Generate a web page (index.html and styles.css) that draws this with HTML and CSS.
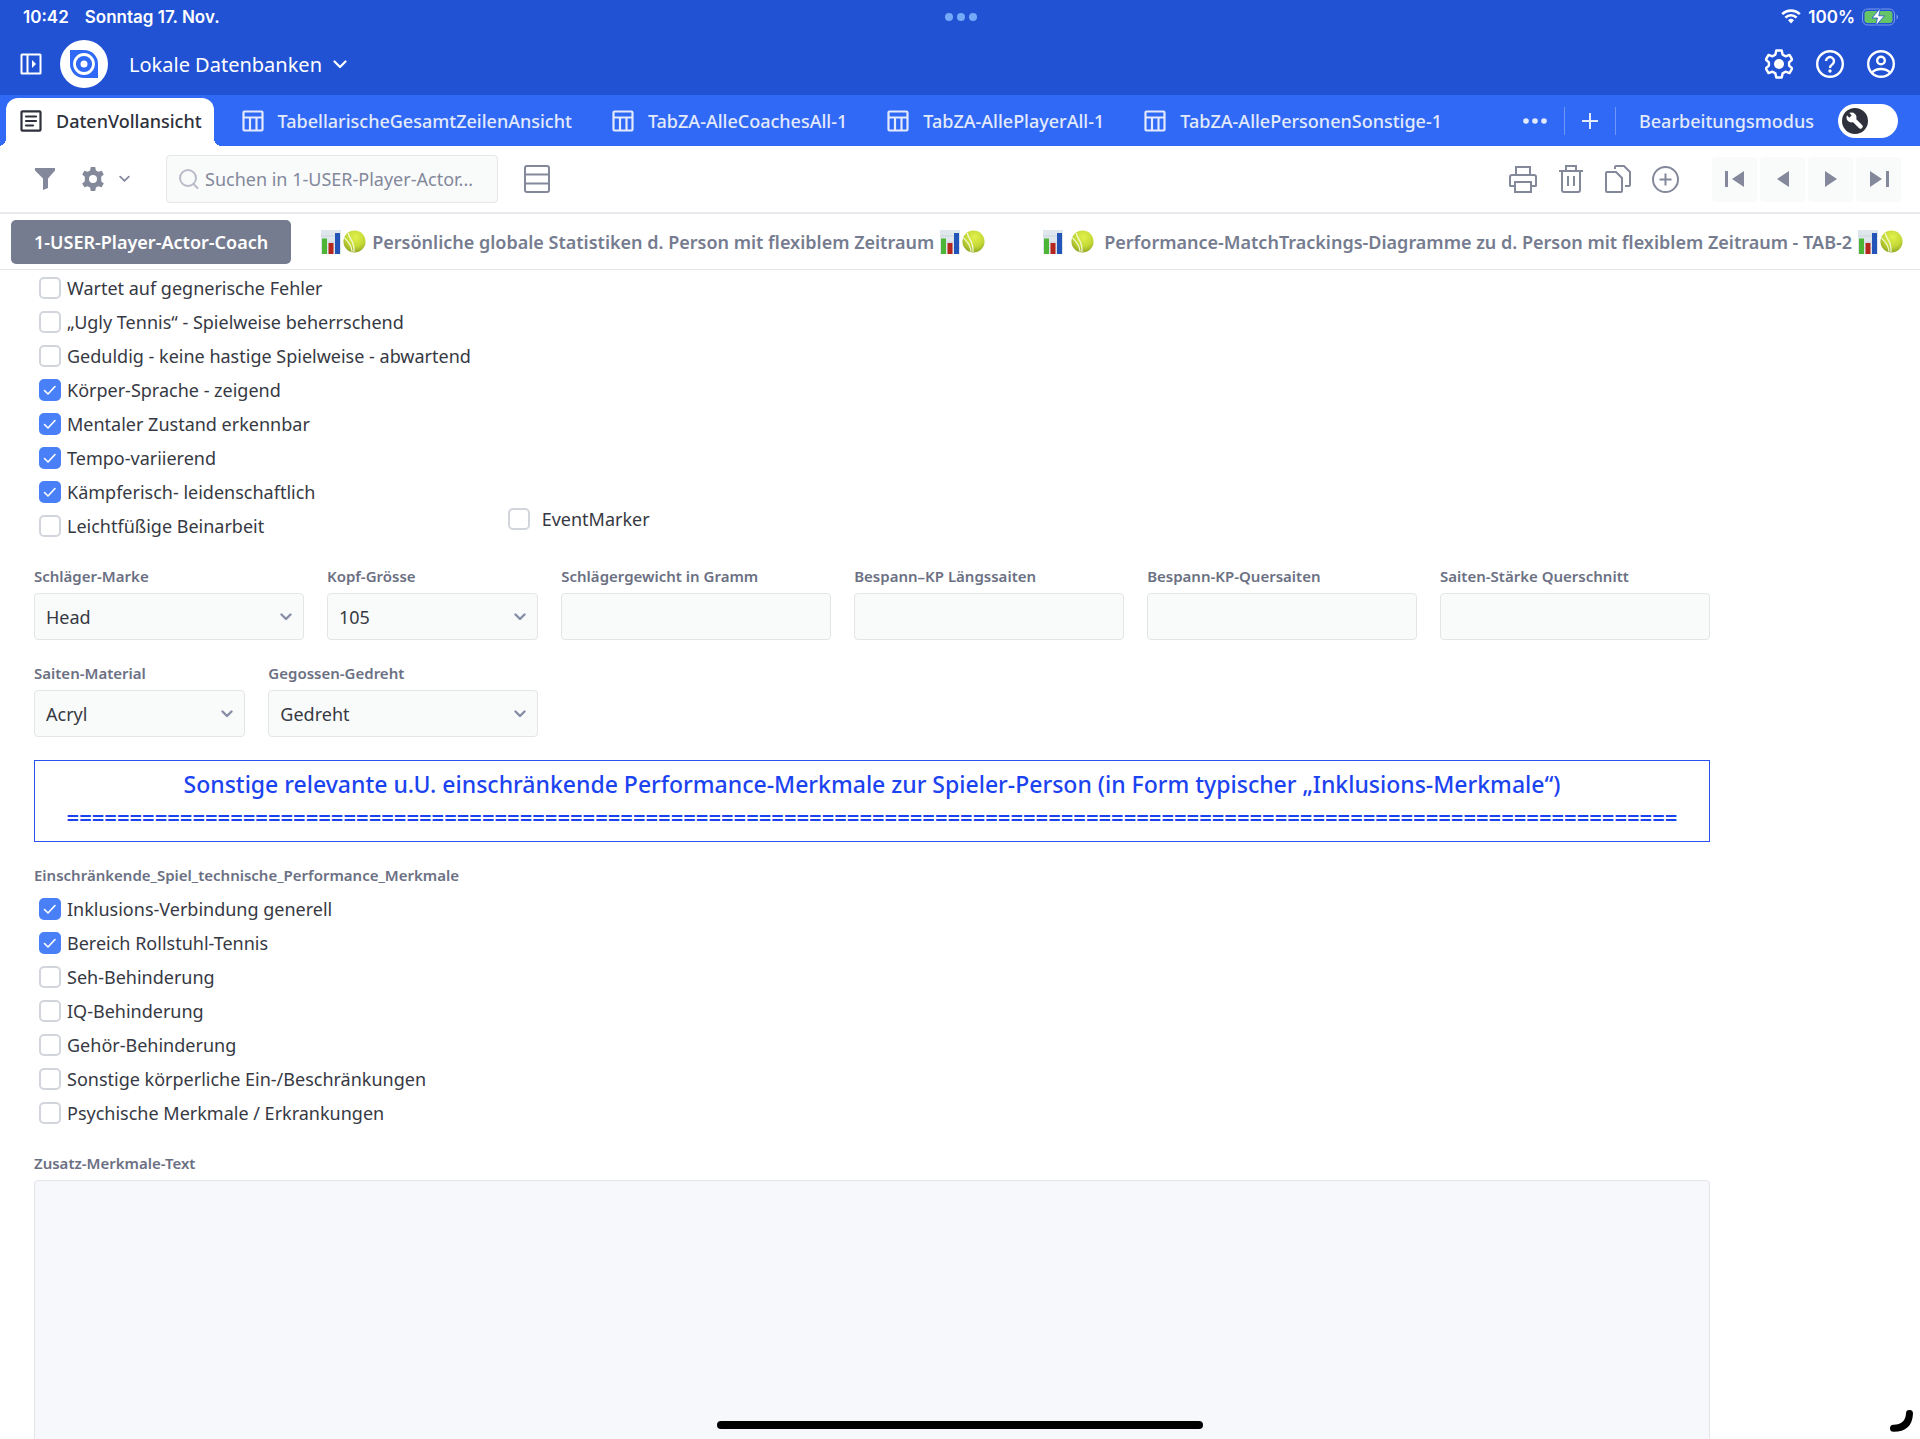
FILE: index.html
```html
<!DOCTYPE html>
<html lang="de">
<head>
  <meta charset="UTF-8" />
  <meta name="viewport" content="width=device-width, initial-scale=1.0" />
  <title>Lokale Datenbanken</title>
  <link rel="stylesheet" href="styles.css">
</head>
<body>
  <svg class="sprite" aria-hidden="true">
    <symbol id="table" viewBox="0 0 22 22">
      <path d="M2.5 1.5h17a1 1 0 0 1 1 1v17a1 1 0 0 1-1 1h-17a1 1 0 0 1-1-1v-17a1 1 0 0 1 1-1zM1.500 7.500h19M8 7.500v13M14.500 7.500v13" fill="none" stroke="currentColor" stroke-width="2.200" />
    </symbol>
    <symbol id="chevron" viewBox="0 0 14 9">
      <path d="M1.500 1.500 7 7l5.500-5.500" fill="none" stroke="currentColor" stroke-width="2.200" stroke-linecap="round" stroke-linejoin="round" />
    </symbol>
    <symbol id="chart" viewBox="0 0 20 24">
      <path d="M0 0h20v24H0z" fill="#dfe6ec" />
      <path d="M0 6h20M0 12h20M0 18h20" stroke="#cbd5de" />
      <path d="M1 8.500h5V24H1z" fill="#4db535" />
      <path d="M7.500 13h5v11h-5z" fill="#b5271e" />
      <path d="M14 3h5v21h-5z" fill="#2355b8" />
    </symbol>
    <symbol id="ball" viewBox="0 0 24 24">
      <circle cx="12" cy="12" r="11.500" fill="url(#felt)" />
      <path d="M5.500 3C6 9.500 12.500 11 11.500 23M1.500 8C4 12 8.500 13 9.500 22.500" fill="none" stroke="#f3f8d8" stroke-width="1.300" />
    </symbol>
    <defs>
      <radialGradient id="felt" cx="0.55" cy="0.3" r="0.7">
        <stop offset="0" stop-color="#e2f04c" />
        <stop offset="0.6" stop-color="#c3d936" />
        <stop offset="1" stop-color="#94a824" />
      </radialGradient>
    </defs>
  </svg>

  <header class="header">
    <div class="status">
      <div class="status-side">
        <span>10:42</span>
        <span>Sonntag 17. Nov.</span>
      </div>
      <div class="status-dots"><i></i><i></i><i></i></div>
      <div class="status-side status-right">
        <svg width="20" height="15" viewBox="0 0 20 15" fill="none" stroke="#fff" stroke-width="2.600">
          <path d="M1.200 5.200a12.500 12.500 0 0 1 17.600 0M4.400 8.600a8 8 0 0 1 11.200 0" />
          <path d="M7 11.300a4.300 4.300 0 0 1 6 0L10 14.500z" fill="#fff" stroke="none" />
        </svg>
        <span>100%</span>
        <svg width="37" height="18" viewBox="0 0 37 18">
          <rect x="0.500" y="1" width="32" height="16" rx="5" fill="none" stroke="#7d9be6" />
          <rect x="2.500" y="3" width="28" height="12" rx="3" fill="#65c466" />
          <path d="M34.500 6.500c2 .8 2 4.200 0 5z" fill="#7d9be6" />
          <path d="M18.500 0 10 10h5.500L13.500 18 22.500 7.800h-5.700z" fill="#fff" stroke="#2152d4" stroke-width="0.800" />
        </svg>
      </div>
    </div>
    <div class="appbar">
      <button class="icon-btn" aria-label="Seitenleiste">
        <svg width="22" height="22" viewBox="0 0 22 22" fill="none" stroke="currentColor" stroke-width="2">
          <path d="M2 1.500h18a.5.5 0 0 1 .5.5v18a.5.5 0 0 1-.5.5H2a.5.5 0 0 1-.5-.5V2a.5.5 0 0 1 .5-.5zM7.500 2v18" />
          <path d="M12 7v8l4-4z" fill="currentColor" stroke="none" />
        </svg>
      </button>
      <svg class="logo" width="48" height="48" viewBox="0 0 48 48">
        <circle cx="24" cy="24" r="24" fill="#fff" />
        <path d="M10 10h14a14 14 0 0 1 14 14v14H24a14 14 0 0 1-14-14z" fill="#3069f6" />
        <circle cx="24" cy="24" r="9.500" fill="none" stroke="#fff" stroke-width="2.800" />
        <circle cx="24" cy="24" r="3.500" fill="#fff" />
      </svg>
      <button class="db-btn">
        Lokale Datenbanken
        <svg width="14" height="9"><use href="#chevron" /></svg>
      </button>
      <div class="appbar-right">
        <button class="icon-btn" aria-label="Einstellungen">
          <svg width="28" height="30" viewBox="0 0 28 30">
            <path d="M11.300 1.500h5.400l.9 4.100 2.900 1.700 4-1.400 2.700 4.700-3.100 2.800v3.200l3.100 2.800-2.700 4.700-4-1.400-2.900 1.700-.9 4.100h-5.400l-.9-4.100-2.900-1.700-4 1.400-2.700-4.700 3.100-2.800v-3.200L.8 10.600l2.700-4.700 4 1.400 2.900-1.700z" fill="none" stroke="currentColor" stroke-width="2.400" stroke-linejoin="round" />
            <circle cx="14" cy="15" r="5" fill="currentColor" />
          </svg>
        </button>
        <button class="icon-btn" aria-label="Hilfe">
          <svg width="28" height="28" viewBox="0 0 28 28" fill="none" stroke="currentColor" stroke-width="2.400">
            <circle cx="14" cy="14" r="12.800" />
            <path d="M10 11a4 4 0 1 1 6.500 3.200c-1.700 1.300-2.500 1.800-2.500 3.800" />
            <circle cx="14" cy="21" r="1.700" fill="currentColor" stroke="none" />
          </svg>
        </button>
        <button class="icon-btn" aria-label="Konto">
          <svg width="28" height="28" viewBox="0 0 28 28" fill="none" stroke="currentColor" stroke-width="2.400">
            <circle cx="14" cy="14" r="12.800" />
            <circle cx="14" cy="10.500" r="3.800" />
            <path d="M5 22.500c4.500-4.600 13.500-4.600 18 0" />
          </svg>
        </button>
      </div>
    </div>
  </header>

  <nav class="tabs">
    <a class="tab active" href="#">
      <svg width="22" height="22" viewBox="0 0 22 22" fill="none" stroke="currentColor" stroke-width="2.200">
        <path d="M2.500 1.300h17a1 1 0 0 1 1 1v17.400a1 1 0 0 1-1 1h-17a1 1 0 0 1-1-1V2.300a1 1 0 0 1 1-1z" />
        <path d="M6 6.500h10M6 11h10M6 15.500h7" stroke-linecap="round" />
      </svg>
      DatenVollansicht
    </a>
    <a class="tab" href="#"><svg width="22" height="22"><use href="#table" /></svg>TabellarischeGesamtZeilenAnsicht</a>
    <a class="tab" href="#"><svg width="22" height="22"><use href="#table" /></svg>TabZA-AlleCoachesAll-1</a>
    <a class="tab" href="#"><svg width="22" height="22"><use href="#table" /></svg>TabZA-AllePlayerAll-1</a>
    <a class="tab" href="#"><svg width="22" height="22"><use href="#table" /></svg>TabZA-AllePersonenSonstige-1</a>
    <div class="tabs-right">
      <button class="icon-btn" aria-label="Mehr">
        <svg width="24" height="6" viewBox="0 0 24 6" fill="currentColor"><circle cx="3" cy="3" r="2.800" /><circle cx="12" cy="3" r="2.800" /><circle cx="21" cy="3" r="2.800" /></svg>
      </button>
      <span class="divider"></span>
      <button class="icon-btn" aria-label="Neuer Tab">
        <svg width="16" height="16" viewBox="0 0 16 16" stroke="currentColor" stroke-width="2"><path d="M8 0v16M0 8h16" /></svg>
      </button>
      <span class="divider"></span>
      <label class="edit-mode">
        Bearbeitungsmodus
        <input type="checkbox" class="toggle-input" />
        <span class="toggle">
          <svg width="26" height="26" viewBox="0 0 26 26">
            <circle cx="13" cy="13" r="13" fill="#2e313b" />
            <path d="M9.500 9.500 18.500 18.500" stroke="#fff" stroke-width="4.500" stroke-linecap="round" />
            <circle cx="9.500" cy="9.500" r="5" fill="#fff" />
            <path d="M4 4 8.500 8.500" stroke="#2e313b" stroke-width="3.200" />
          </svg>
        </span>
      </label>
    </div>
  </nav>

  <div class="toolbar">
    <button class="icon-btn" aria-label="Filter">
      <svg width="20" height="22" viewBox="0 0 20 22" fill="currentColor"><path d="M0 0h20v2.500l-7 8V20l-5 2V10.500L0 2.500z" /></svg>
    </button>
    <button class="icon-btn gear-btn" aria-label="Optionen">
      <svg width="24" height="24" viewBox="0 0 24 24" fill="currentColor">
        <path fill-rule="evenodd" d="M9.800 0h4.400l.7 3.400 2.400 1.400 3.300-1.100 2.200 3.800-2.600 2.300v4.400l2.600 2.300-2.200 3.800-3.300-1.100-2.400 1.400-.7 3.400H9.800l-.7-3.400-2.400-1.400-3.300 1.100-2.200-3.800 2.600-2.300V9.800L1.200 7.500l2.200-3.800 3.300 1.100 2.400-1.400zM12 8a4 4 0 1 0 0 8 4 4 0 0 0 0-8z" />
      </svg>
      <svg width="11" height="8"><use href="#chevron" /></svg>
    </button>
    <label class="search">
      <svg width="20" height="20" viewBox="0 0 20 20" fill="none" stroke="#b9bcc8" stroke-width="2"><circle cx="9" cy="9" r="8" /><path d="m14.500 15 4 4" stroke-linecap="round" /></svg>
      <input type="text" placeholder="Suchen in 1-USER-Player-Actor..." aria-label="Suchen" />
    </label>
    <button class="icon-btn" aria-label="Listenansicht">
      <svg width="26" height="28" viewBox="0 0 26 28" fill="none" stroke="currentColor" stroke-width="2"><rect x="1" y="1" width="24" height="26" rx="2" /><path d="M1 9.500h24M1 18.500h24" /></svg>
    </button>
    <div class="toolbar-right">
      <button class="icon-btn" aria-label="Drucken">
        <svg width="28" height="28" viewBox="0 0 28 28" fill="none" stroke="currentColor" stroke-width="2">
          <path d="M7 10V2h14v8M5 21H1.500a.5.5 0 0 1-.5-.5V12a2 2 0 0 1 2-2h22a2 2 0 0 1 2 2v8.500a.5.5 0 0 1-.5.5H23M5 17h18M6 17v10h16V17" />
        </svg>
      </button>
      <button class="icon-btn" aria-label="Löschen">
        <svg width="26" height="28" viewBox="0 0 26 28" fill="none" stroke="currentColor" stroke-width="2">
          <path d="M1 6h24M8 6V1h10v5M4 6v19a2 2 0 0 0 2 2h14a2 2 0 0 0 2-2V6M10 11v10M16 11v10" />
        </svg>
      </button>
      <button class="icon-btn" aria-label="Duplizieren">
        <svg width="26" height="28" viewBox="0 0 26 28" fill="none" stroke="currentColor" stroke-width="2">
          <path d="M1 8a1 1 0 0 1 1-1h9l6 6v13a1 1 0 0 1-1 1H2a1 1 0 0 1-1-1zM10 4V2a1 1 0 0 1 1-1h8l6 6v13a1 1 0 0 1-1 1h-4" />
        </svg>
      </button>
      <button class="icon-btn" aria-label="Hinzufügen">
        <svg width="27" height="27" viewBox="0 0 27 27" fill="none" stroke="currentColor" stroke-width="2"><circle cx="13.500" cy="13.500" r="12.500" /><path d="M13.500 7.500v12M7.500 13.500h12" /></svg>
      </button>
      <div class="pager">
        <button aria-label="Erster"><svg width="20" height="18" viewBox="0 0 20 18" fill="currentColor"><path d="M0 1h3v16H0zM19 1v16L7 9z" /></svg></button>
        <button aria-label="Zurück"><svg width="20" height="18" viewBox="0 0 20 18" fill="currentColor"><path d="M16 1v16L4 9z" /></svg></button>
        <button aria-label="Weiter"><svg width="20" height="18" viewBox="0 0 20 18" fill="currentColor"><path d="M4 1v16l12-8z" /></svg></button>
        <button aria-label="Letzter"><svg width="20" height="18" viewBox="0 0 20 18" fill="currentColor"><path d="M1 1v16l12-8zM17 1h3v16h-3z" /></svg></button>
      </div>
    </div>
  </div>

  <nav class="subtabs">
    <a class="subtab active" href="#">1-USER-Player-Actor-Coach</a>
    <a class="subtab" href="#">
      <span class="emoji"><svg width="20" height="24"><use href="#chart" /></svg><svg width="23" height="23"><use href="#ball" /></svg></span>
      <span>Persönliche globale Statistiken d. Person mit flexiblem Zeitraum</span>
      <span class="emoji"><svg width="20" height="24"><use href="#chart" /></svg><svg width="23" height="23"><use href="#ball" /></svg></span>
    </a>
    <a class="subtab" href="#">
      <span class="emoji wide"><svg width="20" height="24"><use href="#chart" /></svg><svg width="23" height="23"><use href="#ball" /></svg></span>
      <span>Performance-MatchTrackings-Diagramme zu d. Person mit flexiblem Zeitraum - TAB-2</span>
      <span class="emoji"><svg width="20" height="24"><use href="#chart" /></svg><svg width="23" height="23"><use href="#ball" /></svg></span>
    </a>
  </nav>

  <main class="content">
    <form class="form">
      <div class="checks span-8">
        <label class="check"><input type="checkbox" />Wartet auf gegnerische Fehler</label>
        <label class="check"><input type="checkbox" />„Ugly Tennis“ - Spielweise beherrschend</label>
        <label class="check"><input type="checkbox" />Geduldig - keine hastige Spielweise - abwartend</label>
        <label class="check"><input type="checkbox" checked />Körper-Sprache - zeigend</label>
        <label class="check"><input type="checkbox" checked />Mentaler Zustand erkennbar</label>
        <label class="check"><input type="checkbox" checked />Tempo-variierend</label>
        <label class="check"><input type="checkbox" checked />Kämpferisch- leidenschaftlich</label>
        <label class="check"><input type="checkbox" />Leichtfüßige Beinarbeit</label>
      </div>
      <label class="check event span-5"><input type="checkbox" />EventMarker</label>

      <div class="field span-5 first">
        <label for="marke">Schläger-Marke</label>
        <select id="marke"><option>Head</option></select>
      </div>
      <div class="field span-4">
        <label for="kopf">Kopf-Grösse</label>
        <select id="kopf"><option>105</option></select>
      </div>
      <div class="field span-5">
        <label for="gewicht">Schlägergewicht in Gramm</label>
        <input type="text" id="gewicht" />
      </div>
      <div class="field span-5">
        <label for="laengs">Bespann–KP Längssaiten</label>
        <input type="text" id="laengs" />
      </div>
      <div class="field span-5">
        <label for="quer">Bespann-KP-Quersaiten</label>
        <input type="text" id="quer" />
      </div>
      <div class="field span-5">
        <label for="staerke">Saiten-Stärke Querschnitt</label>
        <input type="text" id="staerke" />
      </div>

      <div class="field span-4 first">
        <label for="material">Saiten-Material</label>
        <select id="material"><option>Acryl</option></select>
      </div>
      <div class="field span-5">
        <label for="gedreht">Gegossen-Gedreht</label>
        <select id="gedreht"><option>Gedreht</option></select>
      </div>

      <div class="banner full">
        <h2>Sonstige relevante u.U. einschränkende Performance-Merkmale zur Spieler-Person (in Form typischer „Inklusions-Merkmale“)</h2>
        <p>================================================================================================================================</p>
      </div>

      <fieldset class="field full">
        <legend>Einschränkende_Spiel_technische_Performance_Merkmale</legend>
        <div class="checks">
          <label class="check"><input type="checkbox" checked />Inklusions-Verbindung generell</label>
          <label class="check"><input type="checkbox" checked />Bereich Rollstuhl-Tennis</label>
          <label class="check"><input type="checkbox" />Seh-Behinderung</label>
          <label class="check"><input type="checkbox" />IQ-Behinderung</label>
          <label class="check"><input type="checkbox" />Gehör-Behinderung</label>
          <label class="check"><input type="checkbox" />Sonstige körperliche Ein-/Beschränkungen</label>
          <label class="check"><input type="checkbox" />Psychische Merkmale / Erkrankungen</label>
        </div>
      </fieldset>

      <div class="field full">
        <label for="zusatz">Zusatz-Merkmale-Text</label>
        <textarea id="zusatz"></textarea>
      </div>
    </form>
  </main>

  <div class="home-bar"></div>
  <svg class="corner" width="30" height="30" viewBox="0 0 30 30"><path d="M25.500 4.500C25 14 20 19.300 9.500 19.300" fill="none" stroke="#000" stroke-width="7" stroke-linecap="round" /></svg>
</body>
</html>
```
FILE: styles.css
```css
* {
  box-sizing: border-box;
}

body {
  margin: 0;
  height: 100vh;
  display: flex;
  flex-direction: column;
  overflow: hidden;
  font-family: "Noto Sans", sans-serif;
  font-size: 18px;
  color: #363943;
  background: #fff;
}

svg {
  display: block;
  flex: none;
}

a {
  color: inherit;
  text-decoration: none;
}

button,
input,
select,
textarea {
  font: inherit;
  color: inherit;
}

button {
  padding: 0;
  border: none;
  background: none;
  cursor: pointer;
}

.sprite {
  position: absolute;
  width: 0;
  height: 0;
}

.icon-btn {
  display: flex;
  align-items: center;
}

/* header */
.header {
  background: #2152d4;
  color: #fff;
}

.status {
  display: grid;
  grid-template-columns: 1fr auto 1fr;
  align-items: center;
  height: 33px;
  padding: 0 21px 0 23px;
  font-family: Inter, sans-serif;
  font-size: 17px;
  font-weight: 600;
}

.status-side {
  display: flex;
  align-items: center;
  gap: 16px;
}

.status-right {
  justify-content: flex-end;
  gap: 7px;
}

.status-dots {
  display: flex;
  gap: 4px;
}

.status-dots i {
  width: 8px;
  height: 8px;
  border-radius: 50%;
  background: #74aaf8;
}

.appbar {
  display: flex;
  align-items: center;
  height: 62px;
  padding: 0 25px 0 20px;
}

.logo {
  margin: 0 21px 0 18px;
}

.db-btn {
  display: flex;
  align-items: center;
  gap: 11px;
  font-size: 20px;
}

.appbar-right {
  display: flex;
  gap: 23px;
  margin-left: auto;
}

/* view tabs */
.tabs {
  display: flex;
  align-items: flex-end;
  gap: 14px;
  height: 51px;
  padding-left: 6px;
  background: #3069f6;
  color: #e3eafb;
  font-weight: 500;
}

.tab {
  display: flex;
  align-items: center;
  gap: 14px;
  height: 48px;
  padding: 0 12px 2px 14px;
  white-space: nowrap;
}

.tab.active {
  position: relative;
  background: #fff;
  color: #2e313b;
  border-radius: 12px 12px 0 0;
}

.tab.active::before,
.tab.active::after {
  content: "";
  position: absolute;
  bottom: 0;
  width: 8px;
  height: 8px;
}

.tab.active::before {
  right: 100%;
  background: radial-gradient(circle at 0 0, transparent 8px, #fff 8px);
}

.tab.active::after {
  left: 100%;
  background: radial-gradient(circle at 100% 0, transparent 8px, #fff 8px);
}

.tabs-right {
  display: flex;
  align-items: center;
  gap: 17px;
  height: 50px;
  margin-left: auto;
  padding-right: 22px;
}

.divider {
  width: 1px;
  height: 28px;
  background: #6f97f9;
}

.edit-mode {
  display: flex;
  align-items: center;
  gap: 24px;
  margin-left: 6px;
}

.toggle-input {
  position: absolute;
  opacity: 0;
}

.toggle {
  width: 60px;
  height: 34px;
  padding: 4px;
  border-radius: 17px;
  background: #fff;
}

.toggle-input:checked + .toggle {
  padding-left: 30px;
}

/* toolbar */
.toolbar {
  display: flex;
  align-items: center;
  height: 68px;
  padding: 0 19px 0 35px;
  color: #83889b;
  border-bottom: 2px solid #e8eaee;
}

.gear-btn {
  gap: 14px;
  margin-left: 26px;
}

.search {
  display: flex;
  align-items: center;
  gap: 6px;
  width: 332px;
  height: 48px;
  margin: 0 26px 0 36px;
  padding-left: 12px;
  border: 1px solid #e4e6ea;
  border-radius: 4px;
  background: #f9fbfa;
}

.search input {
  flex: 1;
  min-width: 0;
  padding: 0;
  border: none;
  outline: none;
  background: none;
}

.search input::placeholder {
  color: #83889b;
  opacity: 1;
}

.toolbar-right {
  display: flex;
  align-items: center;
  gap: 21px;
  margin-left: auto;
}

.pager {
  display: flex;
  gap: 3px;
  margin-left: 12px;
}

.pager button {
  display: flex;
  align-items: center;
  justify-content: center;
  width: 45px;
  height: 45px;
  border-radius: 4px;
  background: #f9fbfa;
}

/* record tabs */
.subtabs {
  display: flex;
  align-items: center;
  flex: none;
  gap: 30px;
  height: 56px;
  padding-left: 11px;
  border-bottom: 1px solid #e4e5e8;
  color: #767c8f;
  font-weight: 600;
  white-space: nowrap;
  overflow: hidden;
}

.subtab {
  display: flex;
  align-items: center;
  flex: none;
  gap: 6px;
  height: 44px;
  margin-right: 28px;
}

.subtab.active {
  margin-right: 0;
  padding: 0 23px;
  border-radius: 5px;
  background: #767c8f;
  color: #fff;
}

.emoji {
  display: flex;
  gap: 2px;
}

.emoji.wide {
  gap: 8px;
  margin-right: 4px;
}

/* form */
.content {
  flex: 1;
  min-height: 0;
  overflow: hidden;
}

.form {
  display: grid;
  grid-template-columns: repeat(29, minmax(0, 1fr));
  gap: 23px;
  padding: 1px 210px 0 34px;
}

.full {
  grid-column: 1 / -1;
}

.span-8 {
  grid-column-end: span 8;
}

.span-5 {
  grid-column-end: span 5;
}

.span-4 {
  grid-column-end: span 4;
}

.first {
  grid-column-start: 1;
}

.checks {
  display: flex;
  flex-direction: column;
  white-space: nowrap;
}

.check {
  display: flex;
  align-items: center;
  gap: 6px;
  height: 34px;
  padding-left: 5px;
}

.check input {
  appearance: none;
  width: 22px;
  height: 22px;
  margin: 0;
  border: 2px solid #d3d5dd;
  border-radius: 5px;
  background: #fff;
}

.check input:checked {
  border-color: #4a80f7;
  background: #4a80f7 url("data:image/svg+xml,%3Csvg xmlns='http://www.w3.org/2000/svg' viewBox='0 0 14 14' fill='none' stroke='white' stroke-width='1.600' stroke-linecap='round' stroke-linejoin='round'%3E%3Cpath d='M1.500 7.500 5 11l7-7.500'/%3E%3C/svg%3E") center / 14px no-repeat;
}

.check.event {
  align-self: end;
  gap: 12px;
  height: 48px;
}

.field {
  display: flex;
  flex-direction: column;
  min-width: 0;
  margin: 0;
  padding: 0;
  border: none;
}

.field > label,
.field legend {
  margin-bottom: 7px;
  padding: 0;
  font-size: 15px;
  font-weight: 600;
  line-height: 20px;
  color: #6b7083;
}

.field > input,
.field > select,
.field > textarea {
  width: 100%;
  height: 47px;
  padding: 0 11px;
  border: 1px solid #e3e5e9;
  border-radius: 4px;
  background: #f9fbfa;
}

.field > select {
  appearance: none;
  background: #f9fbfa url("data:image/svg+xml,%3Csvg xmlns='http://www.w3.org/2000/svg' viewBox='0 0 12 8' fill='none' stroke='%23888ea6' stroke-width='2.400' stroke-linecap='round' stroke-linejoin='round'%3E%3Cpath d='M1.500 1.500 6 6l4.500-4.500'/%3E%3C/svg%3E") right 11px center / 12px 8px no-repeat;
}

.field > textarea {
  height: 400px;
  background: #f6f8fc;
  resize: none;
}

.banner {
  height: 82px;
  padding: 7px 0;
  border: 1px solid #2a52ee;
  color: #1b43f0;
  font-size: 22px;
  font-weight: 600;
  line-height: 33px;
  text-align: center;
  white-space: nowrap;
}

.banner h2,
.banner p {
  margin: 0;
  font-size: inherit;
  font-weight: inherit;
}

.banner h2 {
  font-size: 23px;
  font-weight: 500;
}

/* screen overlays */
.home-bar {
  position: fixed;
  bottom: 10px;
  left: 50%;
  width: 486px;
  height: 8px;
  margin-left: -243px;
  border-radius: 4px;
  background: #000;
}

.corner {
  position: fixed;
  right: 6px;
  bottom: 0;
}
```
